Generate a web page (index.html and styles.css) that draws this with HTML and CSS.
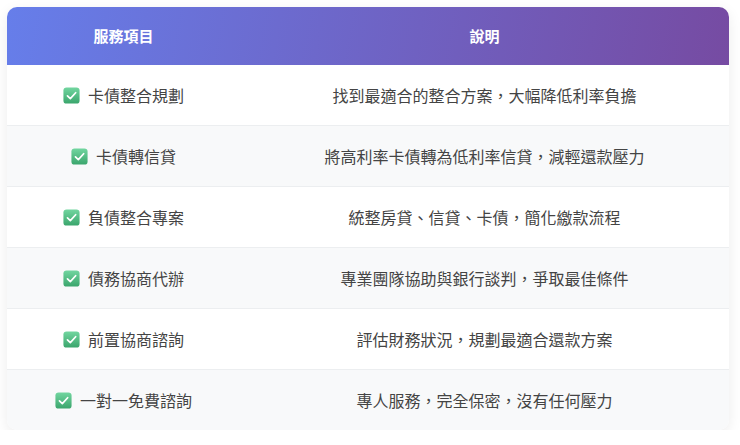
FILE: index.html
```html
<!DOCTYPE html>
<html lang="zh-Hant">
<head>
<meta charset="utf-8">
<link rel="stylesheet" href="styles.css">
</head>
<body>
<div class="wrap">
  <table class="svc">
    <colgroup><col class="c1"><col class="c2"></colgroup>
    <thead>
      <tr><th>服務項目</th><th>說明</th></tr>
    </thead>
    <tbody>
      <tr><td><span class="item"><svg class="chk" viewBox="0 0 16 16"><defs><linearGradient id="g" x1="0" y1="0" x2="0" y2="1"><stop offset="0" stop-color="#72d6a0"/><stop offset="1" stop-color="#3aa56c"/></linearGradient></defs><rect x="0.4" y="0.4" width="15.2" height="15.2" rx="3" fill="url(#g)"/><path d="M4.2 8.3 L6.9 10.9 L11.9 5.4" fill="none" stroke="#fff" stroke-width="1.6" stroke-linecap="round" stroke-linejoin="round"/></svg>卡債整合規劃</span></td><td>找到最適合的整合方案，大幅降低利率負擔</td></tr>
      <tr><td><span class="item"><svg class="chk" viewBox="0 0 16 16"><rect x="0.4" y="0.4" width="15.2" height="15.2" rx="3" fill="url(#g)"/><path d="M4.2 8.3 L6.9 10.9 L11.9 5.4" fill="none" stroke="#fff" stroke-width="1.6" stroke-linecap="round" stroke-linejoin="round"/></svg>卡債轉信貸</span></td><td>將高利率卡債轉為低利率信貸，減輕還款壓力</td></tr>
      <tr><td><span class="item"><svg class="chk" viewBox="0 0 16 16"><rect x="0.4" y="0.4" width="15.2" height="15.2" rx="3" fill="url(#g)"/><path d="M4.2 8.3 L6.9 10.9 L11.9 5.4" fill="none" stroke="#fff" stroke-width="1.6" stroke-linecap="round" stroke-linejoin="round"/></svg>負債整合專案</span></td><td>統整房貸、信貸、卡債，簡化繳款流程</td></tr>
      <tr><td><span class="item"><svg class="chk" viewBox="0 0 16 16"><rect x="0.4" y="0.4" width="15.2" height="15.2" rx="3" fill="url(#g)"/><path d="M4.2 8.3 L6.9 10.9 L11.9 5.4" fill="none" stroke="#fff" stroke-width="1.6" stroke-linecap="round" stroke-linejoin="round"/></svg>債務協商代辦</span></td><td>專業團隊協助與銀行談判，爭取最佳條件</td></tr>
      <tr><td><span class="item"><svg class="chk" viewBox="0 0 16 16"><rect x="0.4" y="0.4" width="15.2" height="15.2" rx="3" fill="url(#g)"/><path d="M4.2 8.3 L6.9 10.9 L11.9 5.4" fill="none" stroke="#fff" stroke-width="1.6" stroke-linecap="round" stroke-linejoin="round"/></svg>前置協商諮詢</span></td><td>評估財務狀況，規劃最適合還款方案</td></tr>
      <tr><td><span class="item"><svg class="chk" viewBox="0 0 16 16"><rect x="0.4" y="0.4" width="15.2" height="15.2" rx="3" fill="url(#g)"/><path d="M4.2 8.3 L6.9 10.9 L11.9 5.4" fill="none" stroke="#fff" stroke-width="1.6" stroke-linecap="round" stroke-linejoin="round"/></svg>一對一免費諮詢</span></td><td>專人服務，完全保密，沒有任何壓力</td></tr>
    </tbody>
  </table>
</div>
</body>
</html>
```
FILE: styles.css
```css
html, body {
  margin: 0;
  padding: 0;
  background: #ffffff;
}
body {
  font-family: "Noto Sans CJK TC", "Noto Sans", sans-serif;
  color: #444444;
}
.wrap {
  padding: 7px 11px 0 7px;
}
.svc {
  width: 100%;
  border-collapse: separate;
  border-spacing: 0;
  table-layout: fixed;
  border-radius: 10px;
  overflow: hidden;
  box-shadow: 0 4px 14px rgba(0, 0, 0, 0.08);
}
.c1 { width: 233px; }
.svc thead tr {
  background: linear-gradient(100deg, #667eea 0%, #764ba2 100%);
}
.svc th {
  color: #ffffff;
  font-weight: 700;
  font-size: 15px;
  line-height: 20px;
  padding: 19px 10px;
  text-align: center;
}
.svc td {
  font-size: 16px;
  line-height: 20px;
  height: 20px;
  padding: 20px 10px;
  text-align: center;
  vertical-align: middle;
  border-bottom: 1px solid #eceef0;
}
.svc tbody tr:nth-child(even) td {
  background: #f8f9fa;
}
.svc tbody tr:last-child td {
  border-bottom: none;
}
.item {
  display: flex;
  justify-content: center;
  align-items: center;
  gap: 8px;
  height: 20px;
}
.chk {
  width: 17px;
  height: 17px;
  flex: none;
}
```
